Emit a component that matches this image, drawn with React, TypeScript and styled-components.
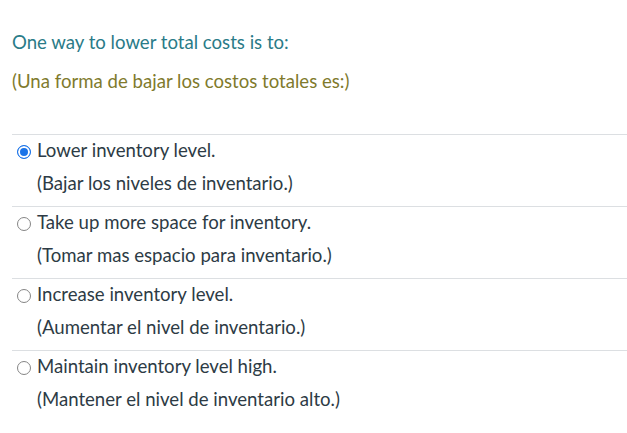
import React from "react";
import styled, { createGlobalStyle } from "styled-components";

const GlobalStyle = createGlobalStyle`
  body {
    margin: 0;
    background: #ffffff;
    font-family: Lato, "Open Sans", sans-serif;
    color: #2d3b45;
  }
`;

interface Answer {
  en: string;
  es: string;
  selected?: boolean;
}

const answers: Answer[] = [
  { en: "Lower inventory level.", es: "(Bajar los niveles de inventario.)", selected: true },
  { en: "Take up more space for inventory.", es: "(Tomar mas espacio para inventario.)" },
  { en: "Increase inventory level.", es: "(Aumentar el nivel de inventario.)" },
  { en: "Maintain inventory level high.", es: "(Mantener el nivel de inventario alto.)" },
];

const App: React.FC = () => {
  return (
    <Wrapper>
      <GlobalStyle />
      <Question>
        <p className="en">One way to lower total costs is to:</p>
        <p className="es">(Una forma de bajar los costos totales es:)</p>
      </Question>
      <List>
        {answers.map((a) => (
          <Row key={a.en}>
            <Radio selected={!!a.selected} />
            <Label>
              <p>{a.en}</p>
              <p>{a.es}</p>
            </Label>
          </Row>
        ))}
      </List>
    </Wrapper>
  );
};

const Wrapper = styled.div`
  padding: 31px 0 0 12px;
  font-size: 18.6px;
`;

const Question = styled.div`
  display: flex;
  flex-direction: column;
  gap: 17px;
  padding-bottom: 42px;

  p {
    margin: 0;
    line-height: 22px;
  }
  .en {
    color: #2a7b88;
  }
  .es {
    color: #807a2c;
  }
`;

const List = styled.div`
  display: flex;
  flex-direction: column;
`;

const Row = styled.div`
  display: flex;
  align-items: flex-start;
  gap: 6px;
  border-top: 1px solid #dcdfe2;
  padding: 4px 0 10px 5px;
  height: 72px;
  box-sizing: border-box;
`;

const Radio = styled.span<{ selected: boolean }>`
  width: 14px;
  height: 14px;
  margin-top: 6px;
  box-sizing: border-box;
  border-radius: 50%;
  border: 1px solid ${(p) => (p.selected ? "#1a73e8" : "#858585")};
  background: ${(p) => (p.selected ? "#1a73e8" : "#fff")};
  box-shadow: ${(p) => (p.selected ? "inset 0 0 0 2px #fff" : "none")};
  flex-shrink: 0;
`;

const Label = styled.div`
  display: flex;
  flex-direction: column;
  gap: 11px;

  p {
    margin: 0;
    line-height: 22px;
  }
`;

export default App;
